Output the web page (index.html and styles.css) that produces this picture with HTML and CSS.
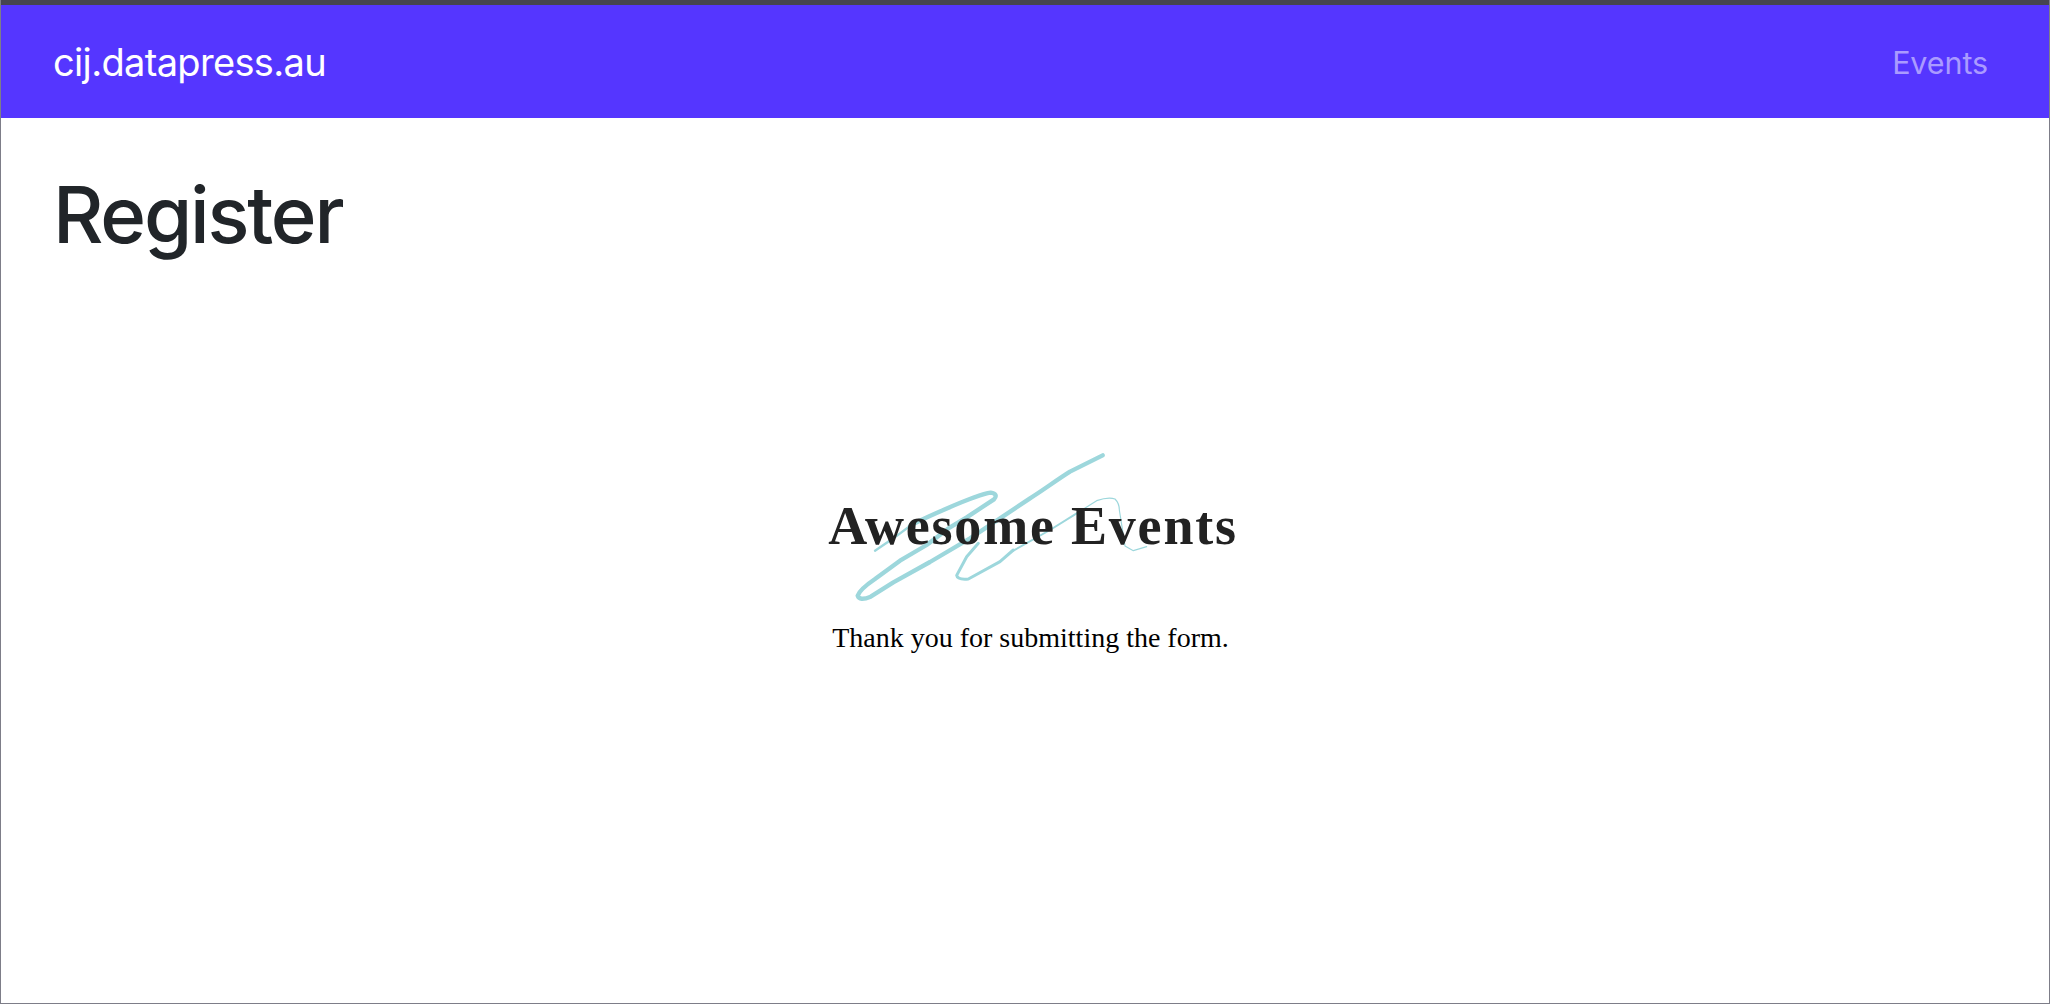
FILE: index.html
```html
<!DOCTYPE html>
<html lang="en">
<head>
<meta charset="utf-8">
<title>Register</title>
<link rel="stylesheet" href="styles.css">
</head>
<body>
<div class="frame">
  <nav class="navbar">
    <a class="brand" href="#">cij.datapress.au</a>
    <a class="nav-link" href="#">Events</a>
  </nav>
  <main class="content">
    <h1 class="title">Register</h1>
    <section class="form-result">
      <div class="logo">
        <svg class="scribble" viewBox="0 0 1350 720" aria-hidden="true">
          <g fill="none" stroke="#9dd7dc" stroke-linecap="round" stroke-linejoin="round">
            <path stroke-width="13" d="M908 76 L810 125 C770 150 730 180 690 205 L510 325 L390 396 L280 457 L212 500 Q178 514 173 497 Q180 478 224 448 L300 392 L380 345 L450 292 L500 262 L582 208 Q596 192 572 188 Q540 192 430 240 C390 258 360 270 330 288"/>
            <path stroke-width="7" d="M330 288 L280 325 L225 362"/>
            <path stroke-width="9" d="M535 340 L500 380 L470 436 Q472 450 505 447 L600 395 L640 360"/>
            <path stroke-width="6" d="M640 362 L750 300 L830 250"/>
            <path stroke-width="3.5" d="M830 250 L890 212 Q925 200 945 207 Q958 220 958 240 L966 290 L975 348 L1000 362 L1040 350"/>
          </g>
        </svg>
        <h2 class="logo-text">Awesome Events</h2>
      </div>
      <p class="thanks">Thank you for submitting the form.</p>
    </section>
  </main>
</div>
</body>
</html>
```

FILE: styles.css
```css
html, body {
  margin: 0;
  padding: 0;
  height: 100%;
  background: #fff;
}
.frame {
  box-sizing: border-box;
  height: 1004px;
  border: 1px solid #7d7d88;
  border-top: 0;
  display: flex;
  flex-direction: column;
  overflow: hidden;
}
.navbar {
  box-sizing: border-box;
  height: 118px;
  border-top: 5px solid #46454f;
  background: #5536ff;
  padding: 0 61px 0 52px;
  display: flex;
  align-items: center;
  justify-content: space-between;
  font-family: Inter, sans-serif;
}
.brand {
  color: #fff;
  font-size: 38px;
  font-weight: 400;
  letter-spacing: -0.66px;
  text-decoration: none;
}
.nav-link {
  margin-top: 2px;
  color: #aa9bff;
  font-size: 30.5px;
  font-weight: 400;
  letter-spacing: -0.1px;
  text-decoration: none;
}
.content {
  flex: 1;
  padding: 0 52px;
}
.title {
  margin: 50px 0 0;
  font-family: Inter, sans-serif;
  font-weight: 500;
  font-size: 78px;
  letter-spacing: -2.2px;
  line-height: 1.2;
  color: #212529;
}
.form-result {
  margin-top: 168px;
  display: flex;
  flex-direction: column;
  align-items: center;
  padding-left: 16px;
}
.logo {
  position: relative;
  width: 466px;
  height: 192px;
  display: flex;
  align-items: center;
  justify-content: center;
}
.scribble {
  position: absolute;
  left: 0;
  top: 0;
  width: 450px;
  height: 240px;
}
.logo-text {
  position: relative;
  margin: 0;
  font-family: "Liberation Serif", serif;
  font-weight: 700;
  font-size: 54px;
  letter-spacing: 1.8px;
  color: #222;
}
.thanks {
  margin: 0;
  padding-right: 5px;
  font-family: "Liberation Serif", serif;
  font-size: 28px;
  color: #000;
}
```
